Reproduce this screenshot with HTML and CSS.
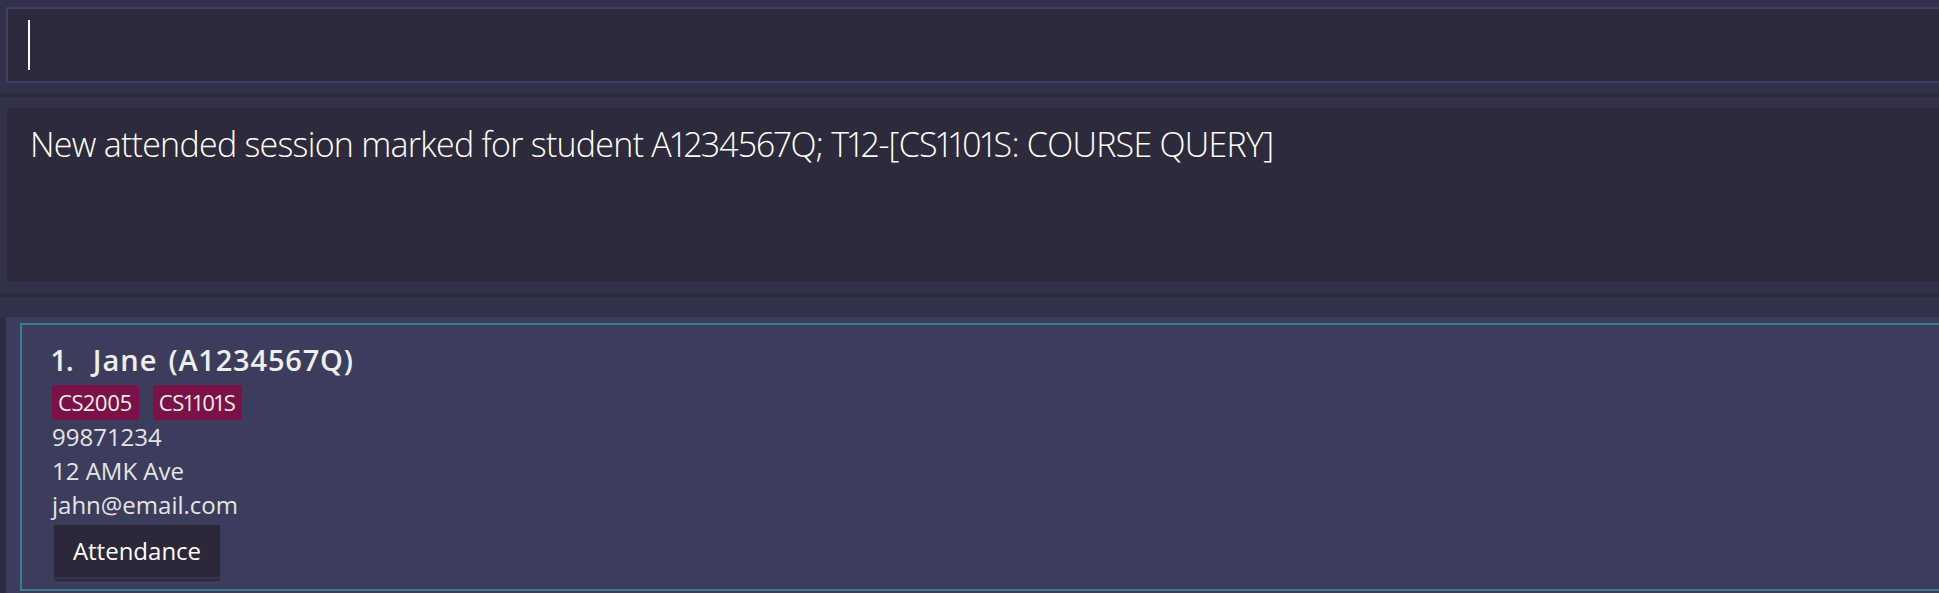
FILE: index.html
```html
<!DOCTYPE html>
<html lang="en">
<head>
<meta charset="utf-8">
<title>TA Assistant</title>
<link rel="stylesheet" href="styles.css">
</head>
<body>
<div class="app">
  <div class="pane pane-command">
    <div class="command-box"><span class="caret"></span></div>
  </div>
  <div class="divider"></div>
  <div class="pane pane-result">
    <div class="result-box">New attended session marked for student A1234567Q; T12-[CS1101S: COURSE QUERY]</div>
  </div>
  <div class="divider"></div>
  <div class="pane-list">
    <div class="list-area">
      <div class="list-panel">
        <div class="card">
          <div class="name-row">
            <span class="idx">1.</span>
            <span class="name">Jane</span>
            <span class="sid">(A1234567Q)</span>
          </div>
          <div class="tags">
            <span class="tag">CS2005</span>
            <span class="tag">CS1101S</span>
          </div>
          <div class="field">99871234</div>
          <div class="field">12 AMK Ave</div>
          <div class="field">jahn@email.com</div>
          <div class="btn">Attendance</div>
        </div>
      </div>
    </div>
  </div>
</div>
</body>
</html>
```
FILE: styles.css
```css
html, body {
  margin: 0;
  padding: 0;
}
body {
  background: #31324a;
  font-family: "Open Sans", "Noto Sans", sans-serif;
  overflow: hidden;
  height: 593px;
}
.app {
  display: flex;
  flex-direction: column;
  height: 593px;
}
.pane-command {
  padding: 7px 0 10px 6px;
}
.command-box {
  height: 72px;
  border: 2px solid #403e63;
  border-right: none;
  background: #2e2a3d;
  display: flex;
  align-items: center;
  padding-left: 20px;
}
.caret {
  width: 2px;
  height: 50px;
  background: #ffffff;
}
.divider {
  height: 4px;
  background: #2a2a3b;
}
.pane-result {
  padding: 10px 0 10px 6px;
}
.result-box {
  height: 176px;
  box-sizing: border-box;
  background: #2d2a3b;
  border: 1px solid #34314a;
  border-right: none;
  padding: 12px 0 0 23px;
  color: #ffffff;
  font-weight: 300;
  font-size: 34px;
  letter-spacing: -0.74px;
  font-variant-numeric: proportional-nums;
  line-height: 48px;
  white-space: nowrap;
}
.pane-list {
  padding-top: 20px;
  flex: 1;
  display: flex;
  flex-direction: column;
}
.list-area {
  flex: 1;
  background: #2c2b3f;
  padding-left: 6px;
  display: flex;
}
.list-panel {
  flex: 1;
  background: #3c3d5c;
  padding: 6px 0 0 14px;
}
.card {
  border: 2px solid #3a7d92;
  border-right: none;
  padding: 15px 0 8px 30px;
  display: flex;
  flex-direction: column;
  align-items: flex-start;
}
.name-row {
  display: flex;
  height: 40px;
  line-height: 40px;
  font-size: 29px;
  font-weight: 600;
  color: #eeeeee;
  white-space: nowrap;
}
.idx {
  font-variant-numeric: proportional-nums;
}
.name {
  margin-left: 19px;
  letter-spacing: 1px;
}
.sid {
  margin-left: 11px;
  letter-spacing: 0.8px;
  font-variant-numeric: tabular-nums;
}
.tags {
  display: flex;
  gap: 14px;
  margin-top: 5px;
}
.tag {
  display: block;
  height: 35px;
  line-height: 35px;
  padding: 0 7px 0 6px;
  background: #7a1248;
  color: #ececec;
  font-size: 22px;
  letter-spacing: -0.4px;
  font-variant-numeric: proportional-nums;
  border-radius: 3px;
}
.field {
  font-size: 24px;
  line-height: 34px;
  color: #e4e4e4;
}
.btn {
  margin: 3px 0 0 2px;
  width: 166px;
  height: 52px;
  line-height: 52px;
  text-align: center;
  background: #2c283a;
  color: #ffffff;
  font-size: 24px;
  border-radius: 0 0 3px 3px;
  box-shadow: 0 3px 0 #363249, 0 4px 1px #262333;
  margin-bottom: 4px;
}
```
